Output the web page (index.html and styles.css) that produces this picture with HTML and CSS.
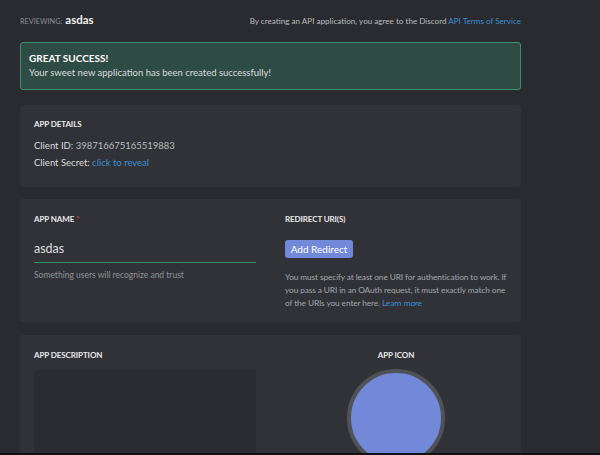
FILE: index.html
```html
<!DOCTYPE html>
<html>
<head>
<meta charset="utf-8">
<link rel="stylesheet" href="styles.css">
</head>
<body>
<div class="page">
  <main class="main">
    <header class="topbar">
      <div class="reviewing"><span class="rev-label">Reviewing:</span><span class="rev-name">asdas</span></div>
      <div class="tos">By creating an API application, you agree to the Discord <a class="link">API Terms of Service</a></div>
    </header>

    <section class="success">
      <div class="success-title">GREAT SUCCESS!</div>
      <div class="success-text">Your sweet new application has been created successfully!</div>
    </section>

    <section class="card details">
      <div class="label">App Details</div>
      <div class="row"><span class="key">Client ID:</span> <span class="val">398716675165519883</span></div>
      <div class="row"><span class="key">Client Secret:</span> <a class="link">click to reveal</a></div>
    </section>

    <section class="card cols">
      <div class="col">
        <div class="label">App Name <span class="req">*</span></div>
        <div class="input">asdas</div>
        <div class="hint">Something users will recognize and trust</div>
      </div>
      <div class="col">
        <div class="label">Redirect URI(s)</div>
        <button class="btn">Add Redirect</button>
        <p class="desc">You must specify at least one URI for authentication to work. If you pass a URI in an OAuth request, it must exactly match one of the URIs you enter here. <a class="link">Learn more</a></p>
      </div>
    </section>

    <section class="card cols last">
      <div class="col">
        <div class="label">App Description</div>
        <div class="textarea"></div>
      </div>
      <div class="col center">
        <div class="label">App Icon</div>
        <div class="avatar"></div>
      </div>
    </section>
  </main>
</div>
<div class="bottom-line"></div>
</body>
</html>
```

FILE: styles.css
```css
* { box-sizing: border-box; }
html, body { margin: 0; padding: 0; height: 100%; }
body {
  background: #292b30;
  font-family: "Lato", "Open Sans", sans-serif;
  color: #dcddde;
  overflow: hidden;
  position: relative;
}
.page { padding: 0 0 0 20px; }
.main { width: 501px; }
.topbar {
  display: flex;
  justify-content: space-between;
  align-items: baseline;
  height: 42px;
  padding-top: 13px;
}
.reviewing { display: flex; align-items: baseline; gap: 3px; }
.rev-label { font-size: 7.3px; text-transform: uppercase; color: #8e9297; }
.rev-name { font-size: 11.5px; font-weight: 700; color: #f0f0f0; }
.tos { font-size: 8.1px; color: #b9bbbe; }
.link { color: #3e8ed0; text-decoration: none; }
.success {
  height: 48px;
  background: #2e4b44;
  border: 1.5px solid #3f8c6e;
  border-radius: 3px;
  padding: 9px 8px 0;
}
.success-title { font-size: 10px; font-weight: 700; color: #ffffff; line-height: 13px; }
.success-text { font-size: 9.5px; color: #dcddde; line-height: 16px; }
.card {
  background: #303237;
  border-radius: 3px;
  padding: 14px;
  margin-top: 15px;
}
.details { height: 82px; padding-top: 13px; }
.label {
  font-size: 8px;
  font-weight: 700;
  text-transform: uppercase;
  color: #e8e9ea;
  line-height: 12px;
  letter-spacing: -0.1px;
}
.req { color: #e04848; font-weight: 400; }
.row { font-size: 9.5px; line-height: 17px; color: #dcddde; }
.details .label { margin-bottom: 7px; }
.val { color: #b9bbbe; }
.cols {
  display: grid;
  grid-template-columns: 222px 222px;
  column-gap: 29px;
  margin-top: 12px;
  height: 123px;
}
.input {
  margin-top: 16px;
  font-size: 12.5px;
  color: #dcddde;
  height: 22px;
  border-bottom: 1.5px solid #3e8e6a;
  padding-bottom: 4px;
}
.hint { font-size: 8.5px; color: #8e9297; margin-top: 7px; }
.btn {
  display: block;
  margin-top: 15px;
  background: #7289da;
  color: #ffffff;
  border: 0;
  border-radius: 3px;
  font-family: inherit;
  font-size: 10px;
  height: 18px;
  width: 68px;
  padding: 0;
}
.desc { margin: 13px 0 0; font-size: 8.3px; line-height: 13px; color: #a3a6aa; letter-spacing: -0.1px; width: 228px; }
.last { margin-top: 13px; height: 140px; }
.textarea {
  margin-top: 9px;
  height: 110px;
  background: #2b2c32;
  border-radius: 3px;
}
.center { display: flex; flex-direction: column; align-items: center; }
.avatar {
  margin-top: 8px;
  width: 98px;
  height: 98px;
  border-radius: 50%;
  background: #7289da;
  border: 4px solid #505257;
}
.bottom-line {
  position: absolute;
  left: 0; right: 0; bottom: 0;
  height: 2px;
  background: #0f1013;
}
```
